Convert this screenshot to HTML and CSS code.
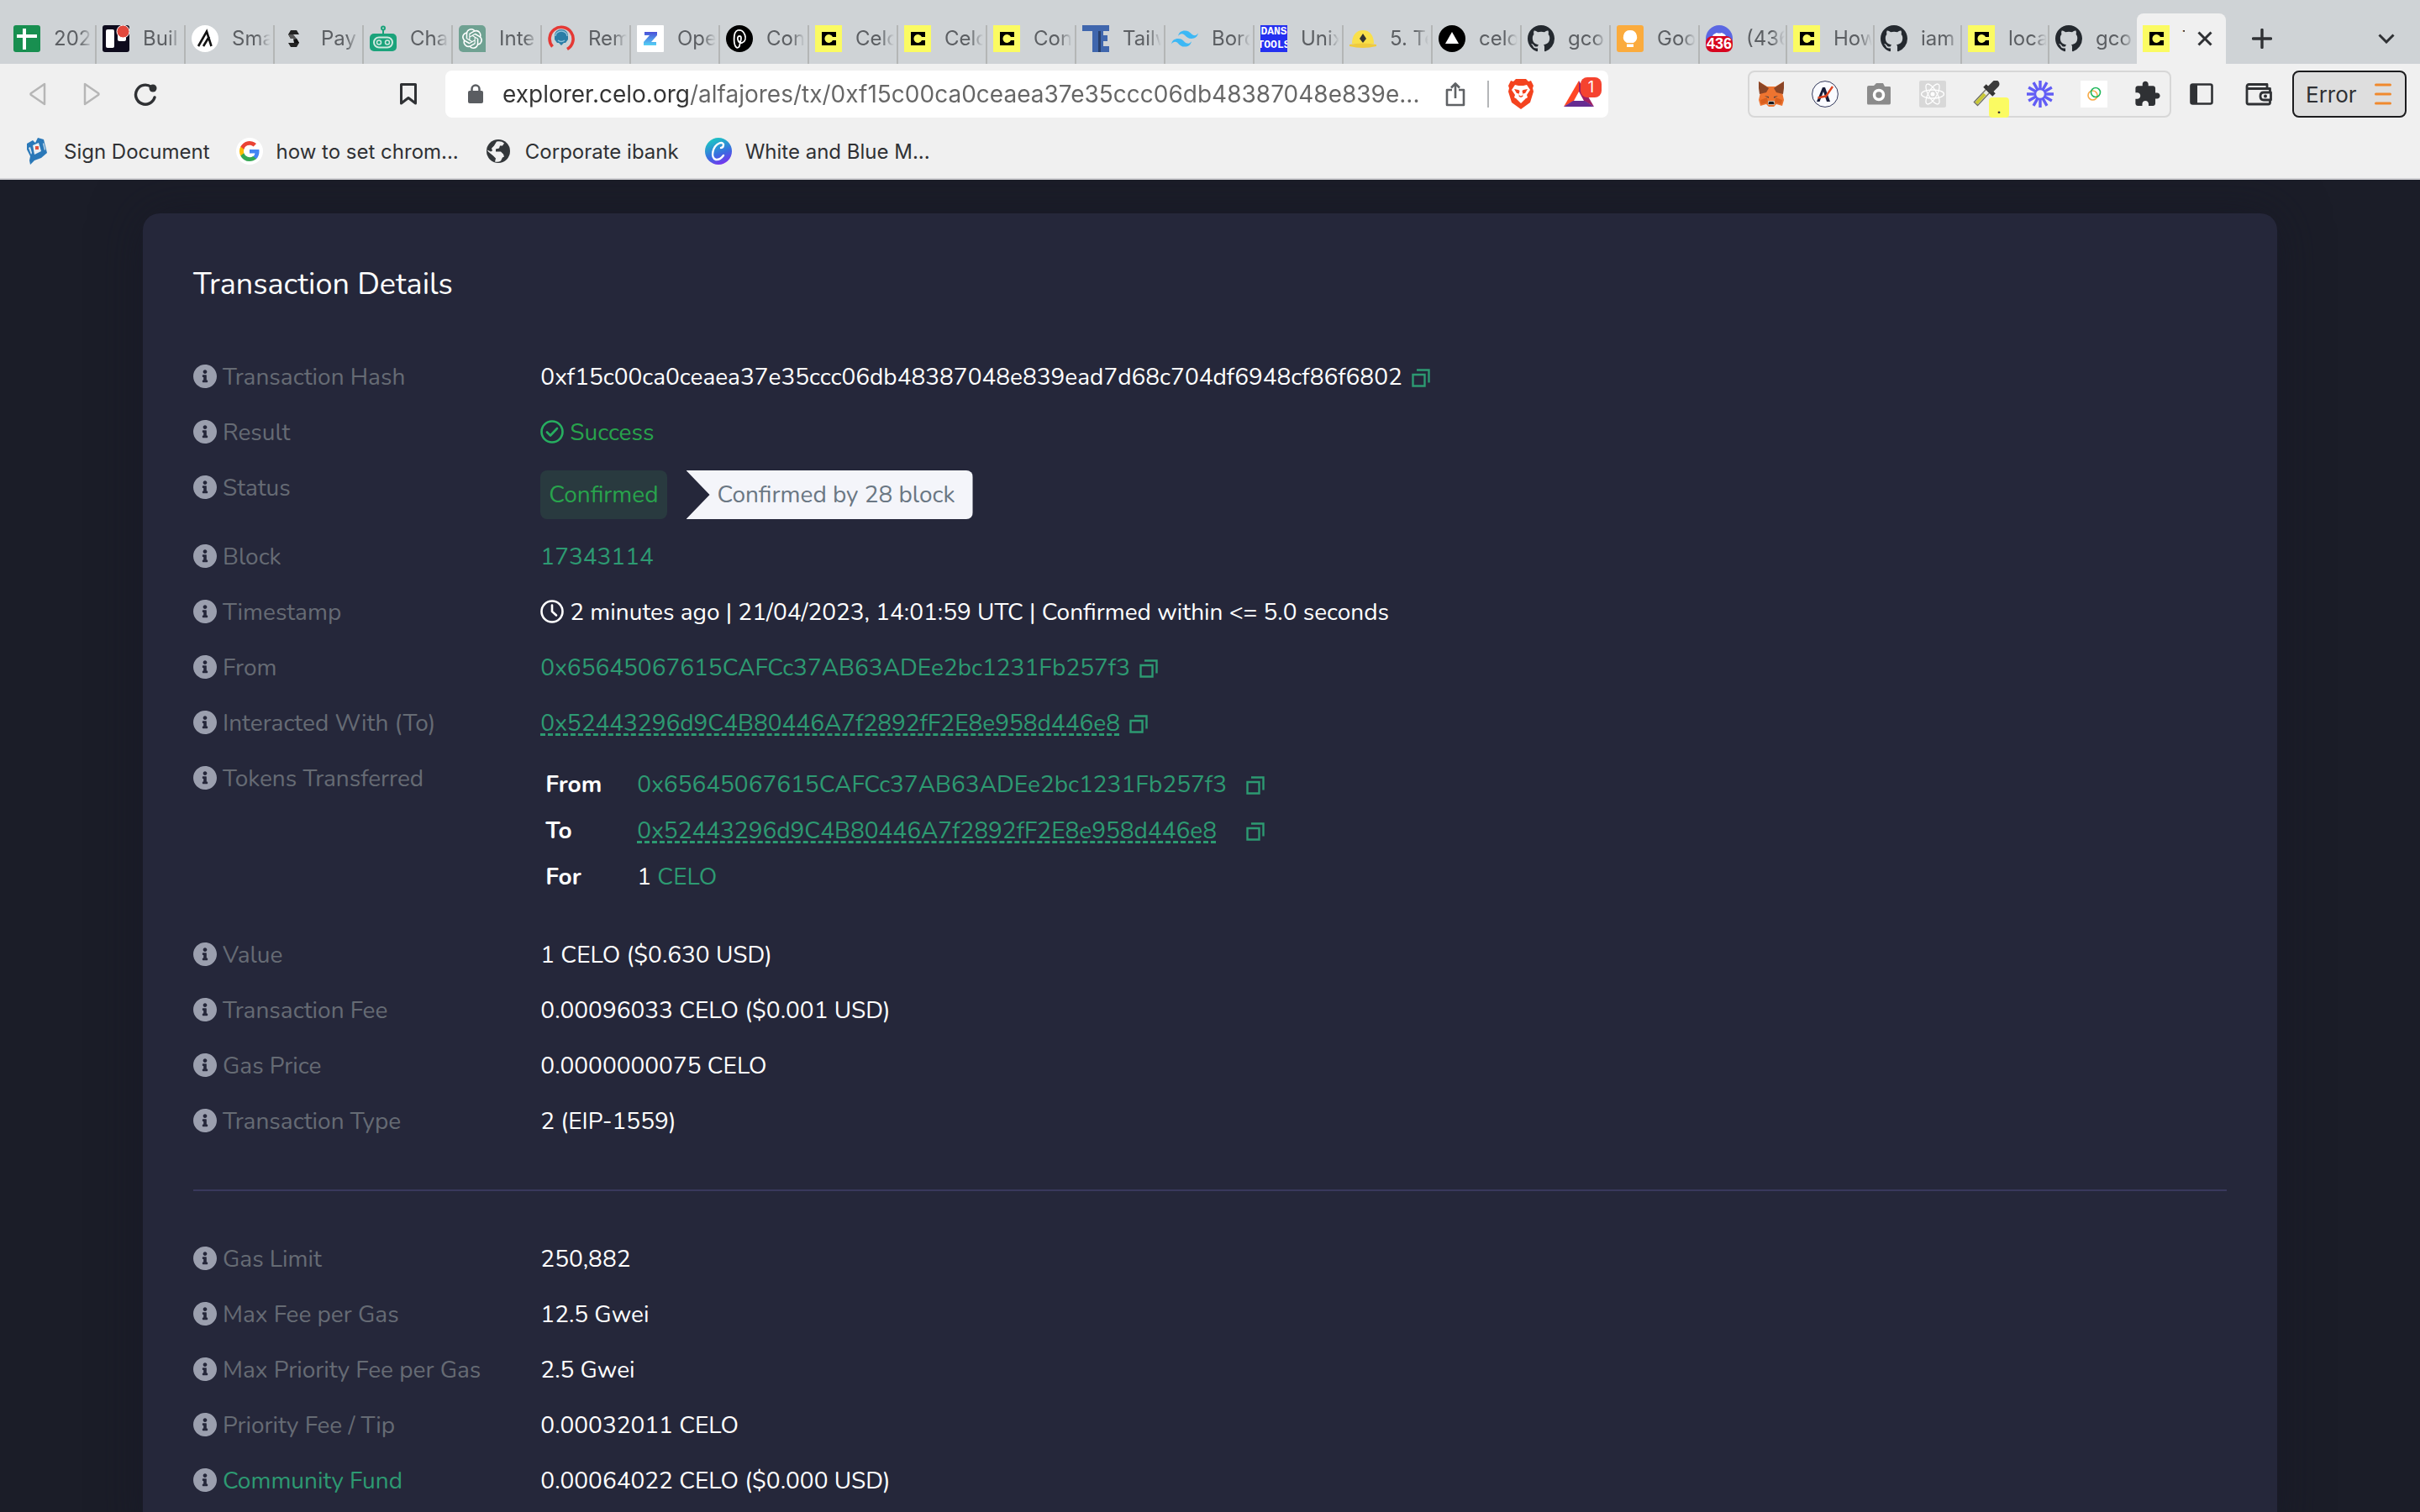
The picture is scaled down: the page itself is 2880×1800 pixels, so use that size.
FILE: index.html
```html
<!DOCTYPE html>
<html lang="en">
<head>
<meta charset="utf-8">
<title>Transaction Details</title>
<link rel="stylesheet" href="styles.css">
</head>
<body>
<svg class="sprite" aria-hidden="true">
  <symbol id="celo" viewBox="0 0 32 32"><path fill="#fbfb62" d="M0 0h32v32H0z"/><path fill="#000" d="M8 8h17v6h-4a5 5 0 1 0 0 4h4v6H8z"/></symbol>
  <symbol id="github" viewBox="0 0 16 16"><path fill="#24292f" d="M8 0C3.58 0 0 3.58 0 8c0 3.54 2.29 6.53 5.47 7.59.4.07.55-.17.55-.38 0-.19-.01-.82-.01-1.49-2.01.37-2.53-.49-2.69-.94-.09-.23-.48-.94-.82-1.13-.28-.15-.68-.52-.01-.53.63-.01 1.08.58 1.23.82.72 1.21 1.87.87 2.33.66.07-.52.28-.87.51-1.07-1.78-.2-3.64-.89-3.64-3.95 0-.87.31-1.59.82-2.15-.08-.2-.36-1.02.08-2.12 0 0 .67-.21 2.2.82.64-.18 1.32-.27 2-.27s1.36.09 2 .27c1.53-1.04 2.2-.82 2.2-.82.44 1.1.16 1.92.08 2.12.51.56.82 1.27.82 2.15 0 3.07-1.87 3.75-3.65 3.95.29.25.54.73.54 1.48 0 1.07-.01 1.93-.01 2.2 0 .21.15.46.55.38A8.01 8.01 0 0 0 16 8c0-4.42-3.58-8-8-8z"/></symbol>
  <symbol id="info" viewBox="8 8 496 496"><path fill="#9b9fae" d="M256 8C119.043 8 8 119.083 8 256c0 136.997 111.043 248 248 248s248-111.003 248-248C504 119.083 392.957 8 256 8zm0 110c23.196 0 42 18.804 42 42s-18.804 42-42 42-42-18.804-42-42 18.804-42 42-42zm56 254c0 6.627-5.373 12-12 12h-88c-6.627 0-12-5.373-12-12v-24c0-6.627 5.373-12 12-12h12v-64h-12c-6.627 0-12-5.373-12-12v-24c0-6.627 5.373-12 12-12h64c6.627 0 12 5.373 12 12v100h12c6.627 0 12 5.373 12 12v24z"/></symbol>
  <symbol id="copy" viewBox="0 0 22 22"><path fill="none" stroke="#2d9a72" stroke-width="2.400" d="M1.500 7h14v13.500h-14zM6 1.500h14.500v15"/></symbol>
</svg>

<div class="window">
  <header class="chrome">
    <nav class="tabs" aria-label="Tabs">
      <a class="tab" href="#"><svg class="favicon" viewBox="0 0 32 32"><rect width="32" height="32" rx="3" fill="#188f50"/><path stroke="#fff" stroke-width="4" d="M13 4v25M4 13h24"/></svg><span class="tab-title">202</span></a>
      <a class="tab" href="#"><svg class="favicon" viewBox="0 0 32 32"><rect width="32" height="32" rx="3" fill="#0d0a1c"/><rect x="4" y="5" width="10" height="22" rx="2" fill="#fff"/><rect x="18" y="5" width="10" height="14" rx="2" fill="#fff"/><circle cx="24.500" cy="7.500" r="7.500" fill="#e2483d" stroke="#fff"/></svg><span class="tab-title">Buil</span></a>
      <a class="tab" href="#"><svg class="favicon" viewBox="0 0 32 32"><circle cx="16" cy="16" r="16" fill="#fff"/><path fill="none" stroke="#111" stroke-width="2.600" d="M8 25 18 7.500 23.500 25M14 25l7-11.500"/></svg><span class="tab-title">Sma</span></a>
      <a class="tab" href="#"><svg class="favicon" viewBox="0 0 32 32"><path fill="#222" d="M12 6h7l3 5h-7l-3 5-3-5z"/><path fill="#555" d="m9 11 3 5h7l-4-5z"/><path fill="#222" d="M19 26h-7l-3-5h7l3-5 3 5z"/><path fill="#111" d="m22 21-3-5-4 .5 1 4.500z"/></svg><span class="tab-title">Pay</span></a>
      <a class="tab" href="#"><svg class="favicon" viewBox="0 0 32 32"><g fill="none" stroke="#1ba37b"><circle cx="16" cy="3.500" r="2" stroke-width="2"/><path stroke-width="2" d="M16 6v5"/></g><rect y="10" width="32" height="21" rx="5" fill="#1ba37b"/><rect x="5" y="14.500" width="22" height="12" rx="6" fill="none" stroke="#d0e8df" stroke-width="2"/><circle cx="11" cy="20.500" r="2.500" fill="none" stroke="#d0e8df" stroke-width="1.500"/><circle cx="21" cy="20.500" r="2.500" fill="none" stroke="#d0e8df" stroke-width="1.500"/></svg><span class="tab-title">Cha</span></a>
      <a class="tab" href="#"><svg class="favicon" viewBox="0 0 32 32"><path fill="#6fa192" d="M5 0h22a5 5 0 0 1 5 5v27H5a5 5 0 0 1-5-5V5a5 5 0 0 1 5-5z"/><path fill="#fff" transform="translate(4 4)" d="M22.282 9.821a5.985 5.985 0 0 0-.516-4.910 6.046 6.046 0 0 0-6.510-2.900A6.065 6.065 0 0 0 4.981 4.182a5.985 5.985 0 0 0-3.998 2.900 6.046 6.046 0 0 0 .743 7.097 5.980 5.980 0 0 0 .511 4.911 6.051 6.051 0 0 0 6.515 2.900A5.985 5.985 0 0 0 13.260 24a6.056 6.056 0 0 0 5.772-4.206 5.989 5.989 0 0 0 3.998-2.900 6.056 6.056 0 0 0-.748-7.073zm-9.022 12.608a4.476 4.476 0 0 1-2.876-1.041l.142-.080 4.778-2.758a.795.795 0 0 0 .393-.681v-6.737l2.020 1.169a.071.071 0 0 1 .038.052v5.583a4.504 4.504 0 0 1-4.495 4.494zm-9.661-4.125a4.471 4.471 0 0 1-.535-3.014l.142.085 4.783 2.758a.771.771 0 0 0 .781 0l5.843-3.369v2.332a.080.080 0 0 1-.033.062L9.740 19.950a4.499 4.499 0 0 1-6.141-1.646zM2.341 7.896a4.485 4.485 0 0 1 2.366-1.973V11.600a.766.766 0 0 0 .388.677l5.814 3.354-2.020 1.169a.076.076 0 0 1-.071 0l-4.830-2.787A4.504 4.504 0 0 1 2.341 7.872zm16.596 3.856L13.104 8.364 15.119 7.200a.076.076 0 0 1 .071 0l4.830 2.791a4.494 4.494 0 0 1-.677 8.104v-5.677a.790.790 0 0 0-.407-.667zm2.011-3.023l-.142-.085-4.774-2.782a.776.776 0 0 0-.785 0L9.409 9.230V6.897a.066.066 0 0 1 .028-.062l4.830-2.787a4.499 4.499 0 0 1 6.680 4.660zM8.307 12.863l-2.020-1.164a.080.080 0 0 1-.038-.057V6.074a4.499 4.499 0 0 1 7.376-3.454l-.142.081L8.704 5.459a.795.795 0 0 0-.393.681zm1.098-2.365l2.602-1.500 2.607 1.500v2.999l-2.597 1.500-2.607-1.500Z"/></svg><span class="tab-title">Inte</span></a>
      <a class="tab" href="#"><svg class="favicon" viewBox="0 0 32 32"><path fill="none" stroke="#e53935" stroke-width="3.600" d="M5.500 25.500A14 14 0 1 1 23 28.500"/><path fill="#2b7da6" d="M8 12a8 7 0 0 1 16 0v5l-3 4h-2l-3 3-3-3h-2l-3-4z"/><path fill="none" stroke="#8fc3dc" stroke-width="1.500" d="M9 13a7 6 0 0 1 14 0M12 18q4 3 8 0"/></svg><span class="tab-title">Rem</span></a>
      <a class="tab" href="#"><svg class="favicon" viewBox="0 0 32 32"><defs><linearGradient id="zg" x1="0" x2="0" y1="0" y2="1"><stop offset="0" stop-color="#4a4fd8"/><stop offset="1" stop-color="#55d2f5"/></linearGradient></defs><rect width="32" height="32" rx="1" fill="#fff"/><path fill="url(#zg)" d="M9 8h15v4l-7 8h6v4H8v-4l7-8H9z"/></svg><span class="tab-title">Ope</span></a>
      <a class="tab" href="#"><svg class="favicon" viewBox="0 0 32 32"><circle cx="16" cy="16" r="16" fill="#000"/><path fill="none" stroke="#fff" stroke-width="1.800" d="M12 26c-3-3-4-18 2-20 8-2 13 12 5 15-5 1-7-8-3-8 3 0 2 4 1 7l-1 5q-2 3-4 1z"/></svg><span class="tab-title">Con</span></a>
      <a class="tab" href="#"><svg class="favicon"><use href="#celo"/></svg><span class="tab-title">Celo</span></a>
      <a class="tab" href="#"><svg class="favicon"><use href="#celo"/></svg><span class="tab-title">Celo</span></a>
      <a class="tab" href="#"><svg class="favicon"><use href="#celo"/></svg><span class="tab-title">Con</span></a>
      <a class="tab" href="#"><svg class="favicon" viewBox="0 0 32 32"><path fill="#3f66ad" d="M0 0h32v7h-7v5h5v7h-5v6h7v7H12V7H0z"/><path fill="#27406e" d="M19 7h3v25h-3z"/></svg><span class="tab-title">Tailw</span></a>
      <a class="tab" href="#"><svg class="favicon" viewBox="2 1 20 20"><path fill="#3db8f5" d="M12 5C9.330 5 7.670 6.330 7 9c1-1.330 2.170-1.830 3.500-1.500.76.190 1.310.740 1.910 1.350C13.390 9.850 14.530 11 17 11c2.670 0 4.330-1.330 5-4-1 1.330-2.170 1.830-3.500 1.500-.76-.19-1.310-.74-1.910-1.350C15.610 6.150 14.470 5 12 5zM7 11c-2.670 0-4.330 1.330-5 4 1-1.330 2.170-1.830 3.500-1.500.76.190 1.310.740 1.910 1.350C8.390 15.850 9.530 17 12 17c2.670 0 4.330-1.330 5-4-1 1.330-2.170 1.830-3.500 1.500-.76-.19-1.310-.74-1.910-1.350C10.610 12.150 9.470 11 7 11z"/></svg><span class="tab-title">Bord</span></a>
      <a class="tab" href="#"><span class="favicon dans"><span>DANS</span><span>TOOLS</span></span><span class="tab-title">Unix</span></a>
      <a class="tab" href="#"><svg class="favicon" viewBox="0 0 32 32"><path fill="#f9e04b" d="M3 22C3 12 8 6 16 6s13 6 13 16z"/><path fill="#f0cb3c" d="M0 23q16-3 32 0v2q-16 4-32 0z"/><path fill="#333" d="m16 10 4 6-4 5-4-5z"/></svg><span class="tab-title">5. Te</span></a>
      <a class="tab" href="#"><svg class="favicon" viewBox="0 0 32 32"><circle cx="16" cy="16" r="16" fill="#000"/><path fill="#fff" d="m16 8 8 14H8z"/></svg><span class="tab-title">celo</span></a>
      <a class="tab" href="#"><svg class="favicon"><use href="#github"/></svg><span class="tab-title">gco</span></a>
      <a class="tab" href="#"><svg class="favicon" viewBox="0 0 32 32"><rect width="32" height="32" rx="3" fill="#fbab3d"/><path fill="#fff" d="M16 6a8 8 0 0 1 4 15h-8a8 8 0 0 1 4-15zM12 22.500h8V26h-8z"/></svg><span class="tab-title">Goo</span></a>
      <a class="tab tab-slim" href="#"><span class="favicon unread"><svg viewBox="0 0 32 32"><circle cx="16" cy="16" r="16" fill="#5b67e3"/><path fill="#fff" d="M8 14q0-3 3-4l2-1q3 1 6 0l2 1q3 1 3 4z"/></svg><span>436</span></span><span class="tab-title">(436)</span></a>
      <a class="tab tab-slim" href="#"><svg class="favicon"><use href="#celo"/></svg><span class="tab-title">How</span></a>
      <a class="tab tab-slim" href="#"><svg class="favicon"><use href="#github"/></svg><span class="tab-title">iam</span></a>
      <a class="tab tab-slim" href="#"><svg class="favicon"><use href="#celo"/></svg><span class="tab-title">loca</span></a>
      <a class="tab tab-slim tab-last" href="#"><svg class="favicon"><use href="#github"/></svg><span class="tab-title">gco</span></a>
      <div class="tab-active"><svg class="favicon"><use href="#celo"/></svg><span class="tab-stub">T</span><button class="icon-btn tab-close" aria-label="Close tab"><svg width="18" height="18" viewBox="0 0 18 18"><path stroke="#2f3134" stroke-width="3" d="m1.500 1.500 15 15m0-15-15 15"/></svg></button></div>
      <button class="icon-btn new-tab" aria-label="New tab"><svg width="24" height="24" viewBox="0 0 24 24"><path stroke="#2f3134" stroke-width="3.400" stroke-linecap="round" d="M12 1.500v21M1.500 12h21"/></svg></button>
      <button class="icon-btn tab-search" aria-label="Search tabs"><svg width="20" height="12" viewBox="0 0 20 12"><path fill="none" stroke="#2f3134" stroke-width="3" d="m1.500 1.500 8.500 8.500 8.500-8.500"/></svg></button>
    </nav>

    <div class="toolbar">
      <div class="history">
        <button class="icon-btn" aria-label="Back"><svg width="20" height="28" viewBox="0 0 20 28"><path fill="none" stroke="#b6b6b6" stroke-width="2.500" stroke-linejoin="round" d="M18 2v24L2 15q-1-1 0-2z"/></svg></button>
        <button class="icon-btn" aria-label="Forward"><svg width="20" height="28" viewBox="0 0 20 28"><path fill="none" stroke="#b6b6b6" stroke-width="2.500" stroke-linejoin="round" d="M2 2v24l16-11q1-1 0-2z"/></svg></button>
        <button class="icon-btn" aria-label="Reload"><svg width="28" height="28" viewBox="0 0 28 28"><path fill="none" stroke="#2f3134" stroke-width="3.400" stroke-linecap="round" d="M21 5.500A11.500 11.500 0 1 0 25 18"/><circle cx="23" cy="7" r="4.500" fill="#2f3134"/></svg></button>
      </div>
      <button class="icon-btn" aria-label="Bookmark this page"><svg width="22" height="28" viewBox="0 0 22 28"><path fill="none" stroke="#2f3134" stroke-width="3" stroke-linejoin="round" d="M2.500 2.500h17V25L11 18.500 2.500 25z"/></svg></button>
      <div class="omnibox">
        <svg width="18" height="24" viewBox="0 0 18 24"><rect y="8" width="18" height="15" rx="2" fill="#5a5d61"/><path fill="none" stroke="#5a5d61" stroke-width="2.500" d="M4.500 9V6a4.500 4.500 0 0 1 9 0v3"/></svg>
        <input class="url" type="text" aria-label="Address" value="explorer.celo.org/alfajores/tx/0xf15c00ca0ceaea37e35ccc06db48387048e839e...">
        <button class="icon-btn" aria-label="Share"><svg width="24" height="32" viewBox="0 0 24 32"><path fill="none" stroke="#5f6265" stroke-width="2.600" stroke-linejoin="round" d="M8 11H2v18h20V11h-6M12 21V3.500M7 8.500l5-5 5 5"/></svg></button>
        <span class="divider"></span>
        <button class="icon-btn shields" aria-label="Brave Shields"><svg width="32" height="36" viewBox="0 0 32 36"><path fill="#f4431f" d="M10 0h12l3 3 3-1 3 6-1 3 1 4-4 13-11 8-11-8L1 15l1-4-1-3 3-6 3 1z"/><path fill="#fff" d="M9 7l4 1h6l4-1 4 6-4 6 1 3-5 3-3-1.500L13 25l-5-3 1-3-4-6z"/><path fill="#f4431f" d="m8 12 5 1 1.500 1-1 5 2.500 1.500 2.500-1.500-1-5 1.500-1 5-1-3 5-3 .5.500 3-2.500 2-2.500-2 .5-3-3-.5z"/><path fill="#fff" d="m11 24 5-2.500 5 2.500-5 5z"/></svg></button>
        <button class="icon-btn rewards" aria-label="Brave Rewards"><svg width="36" height="32" viewBox="0 0 36 32"><path fill="#ff4724" d="M18 0 0 31l12-7 6-11z"/><path fill="#9e1f63" d="M18 0v13l6 11 12 7z"/><path fill="#662d91" d="M0 31h36l-11-7H11z"/></svg><span class="badge">1</span></button>
      </div>
      <div class="extensions">
        <button class="icon-btn" aria-label="MetaMask"><svg width="32" height="32" viewBox="0 0 32 32"><path fill="#ee7430" d="m1 1 10 6h10l10-6-2 13 2 9-2 7-7-2-3 3h-6l-3-3-7 2-2-7 2-9z"/><path fill="#8a4526" d="m1 1 12 8-3 5-8 2-1-7zM31 1 19 9l3 5 8 2 1-7z"/><path fill="#d9601f" d="m3 23 8-3 1 6-8 2zM29 23l-8-3-1 6 8 2z"/><path fill="#5a4640" d="m8 18 5 1v2zM24 18l-5 1v2z"/><path fill="#c9b5a8" d="M12 24h8v5h-8z"/><path fill="#15181c" d="M13.500 25h5l1 3h-7z"/></svg></button>
        <button class="icon-btn" aria-label="Aurora"><svg width="32" height="32" viewBox="0 0 32 32"><circle cx="16" cy="16" r="15.400" fill="#fafbff" stroke="#33395c" stroke-width="1"/><path fill="#171c38" d="M6 25 13 8h3l6 17h-4L14 13 9.500 25z"/><path stroke="#dd4420" stroke-width="2.400" d="m25 7-9 13M7.500 20.500l9-2"/></svg></button>
        <button class="icon-btn" aria-label="Screenshot"><svg width="30" height="26" viewBox="0 0 30 26"><path fill="#8b8b8b" d="M3 3h6l3-3h8l2 4h6q1 0 1 1.500v18q0 2-1.500 2h-25Q1 25.500 1 24V5q0-2 2-2z"/><circle cx="15" cy="14" r="5.500" fill="none" stroke="#fff" stroke-width="3.500"/></svg></button>
        <button class="icon-btn" aria-label="React tools"><svg width="32" height="32" viewBox="0 0 32 32"><rect width="32" height="32" rx="2" fill="#d8d8d8"/><g fill="none" stroke="#fff" stroke-width="1.300"><ellipse cx="16" cy="16" rx="13.500" ry="5"/><ellipse cx="16" cy="16" rx="13.500" ry="5" transform="rotate(60 16 16)"/><ellipse cx="16" cy="16" rx="13.500" ry="5" transform="rotate(120 16 16)"/></g><circle cx="16" cy="16" r="2.500" fill="#fff"/></svg></button>
        <button class="icon-btn picker" aria-label="Colour picker"><svg width="32" height="32" viewBox="0 0 32 32"><path stroke="#6c6c62" stroke-width="7" d="M3 28 18 12"/><path stroke="#e9e9e0" stroke-width="4.500" d="M4 27 18 12"/><path stroke="#c9c832" stroke-width="4" d="m4 27 10-11"/><path stroke="#333" stroke-width="5" d="m14 6 11 11"/><path stroke="#3c3c3c" stroke-width="9" stroke-linecap="round" d="m21 10 6-6"/></svg><span class="picker-badge">.</span></button>
        <button class="icon-btn" aria-label="Loom"><svg width="32" height="32" viewBox="0 0 32 32"><g fill="none" stroke="#625df5" stroke-width="3.400"><circle cx="16" cy="16" r="6" stroke-width="2.400"/><path id="ray" d="M16 0v10M16 22v10"/><use href="#ray" transform="rotate(30 16 16)"/><use href="#ray" transform="rotate(60 16 16)"/><use href="#ray" transform="rotate(90 16 16)"/><use href="#ray" transform="rotate(120 16 16)"/><use href="#ray" transform="rotate(150 16 16)"/></g></svg></button>
        <button class="icon-btn" aria-label="Celo wallet"><svg width="32" height="32" viewBox="0 0 32 32"><path fill="#fff" d="M0 0h32v32H0z"/><g fill="none" stroke-width="1.600"><circle cx="14.500" cy="17.500" r="5.500" stroke="#f7ac4b"/><circle cx="18" cy="14" r="5.500" stroke="#21b85c"/></g></svg></button>
        <button class="icon-btn" aria-label="Extensions"><svg width="32" height="32" viewBox="1 .5 23 23"><path fill="#2f3134" d="M20.500 11H19V7c0-1.100-.9-2-2-2h-4V3.500C13 2.120 11.880 1 10.500 1S8 2.120 8 3.500V5H4c-1.100 0-1.990.9-1.990 2v3.800H3.500c1.490 0 2.700 1.210 2.700 2.700s-1.210 2.700-2.700 2.700H2V20c0 1.100.9 2 2 2h3.800v-1.500c0-1.490 1.210-2.700 2.700-2.700 1.490 0 2.700 1.210 2.700 2.700V22H17c1.100 0 2-.9 2-2v-4h1.500c1.380 0 2.500-1.120 2.500-2.500S21.880 11 20.500 11z"/></svg></button>
      </div>
      <button class="icon-btn sidebar-btn" aria-label="Sidebar"><svg width="28" height="26" viewBox="0 0 28 26"><rect x="1.500" y="1.500" width="25" height="23" rx="2" fill="none" stroke="#2f3134" stroke-width="2.600"/><path fill="#2f3134" d="M1 1h8v24H1z"/></svg></button>
      <button class="icon-btn wallet-btn" aria-label="Wallet"><svg width="32" height="28" viewBox="0 0 32 28"><path fill="none" stroke="#2f3134" stroke-width="2.800" stroke-linejoin="round" d="M29.500 11V7.500H3q-1 0-1 1.500v15q0 2 2 2h23.500q2 0 2-2v-3M2 8V5q0-2.500 2.500-2.500H26V7M30.500 12H22q-4 0-4 4.500t4 4.500h8.500z"/><circle cx="24" cy="16.500" r="2" fill="#2f3134"/></svg></button>
      <button class="error-btn">Error<svg width="20" height="26" viewBox="0 0 20 26"><path stroke="#f0892d" stroke-width="3" stroke-linecap="round" d="M1.500 2h17M1.500 13h17M1.500 24h17"/></svg></button>
    </div>

    <nav class="bookmarks" aria-label="Bookmarks">
      <a href="#"><svg width="32" height="32" viewBox="0 0 32 32"><path fill="#2a78b8" d="m4 7 7-4 3 3 3-6 7 2 4 16-7 6-8 3-5 5-1-5 1-5-4-8z"/><path fill="#e9eef2" d="m11 9 7-3 3 10-8 4z"/><path fill="#d9e6f0" d="m6 12 3 8 1-2-2-7zM23 7l2 8 1-1-2-8z"/><path fill="#e0533f" d="M14 10h4v4h-4z"/></svg>Sign Document</a>
      <a href="#"><svg width="32" height="32" viewBox="0 0 32 32"><circle cx="16" cy="16" r="16" fill="#fff"/><g transform="translate(4 4)"><path fill="#4285f4" d="M23.500 12.300c0-.9-.1-1.600-.2-2.300H12v4.500h6.500a5.600 5.600 0 0 1-2.400 3.700v3h3.900c2.300-2.100 3.500-5.200 3.500-8.900z"/><path fill="#34a853" d="M12 24c3.200 0 6-1.100 8-2.900l-3.900-3a7.200 7.200 0 0 1-10.800-3.800h-4v3.100A12 12 0 0 0 12 24z"/><path fill="#fbbc05" d="M5.300 14.300a7.200 7.200 0 0 1 0-4.600V6.600h-4a12 12 0 0 0 0 10.800z"/><path fill="#ea4335" d="M12 4.800c1.800 0 3.300.6 4.600 1.800L20 3.100A12 12 0 0 0 1.300 6.600l4 3.100A7.100 7.100 0 0 1 12 4.800z"/></g></svg>how to set chrom...</a>
      <a href="#"><svg width="32" height="32" viewBox="0 0 32 32"><circle cx="16" cy="16" r="14" fill="#33373a"/><path fill="#f0f0f0" d="M14 4.500q6-1 9 2l-2 3-3 0-1 3-4 1 0 3 6 0 3 3 1 3-2 1-2 4q-3 2-7 1l1-4-3-3-6-5q-1-1-1-2l4 2 2-1-1-3 3-3z"/></svg>Corporate ibank</a>
      <a href="#"><svg width="32" height="32" viewBox="0 0 32 32"><defs><linearGradient id="cg" x1=".3" x2=".7" y1="0" y2="1"><stop offset=".1" stop-color="#1fbcc6"/><stop offset=".6" stop-color="#3a6de0"/><stop offset="1" stop-color="#7b2ff0"/></linearGradient></defs><circle cx="16" cy="16" r="16" fill="url(#cg)"/><path fill="none" stroke="#fff" stroke-width="2.400" stroke-linecap="round" d="M19 12q3 0 3-4-1-3-5-1.500C9 10 6 24 13 26q5 .5 9-5"/></svg>White and Blue M...</a>
    </nav>
  </header>

  <main class="viewport">
    <section class="card">
      <h1>Transaction Details</h1>
      <dl>
        <div class="row"><dt><svg class="info"><use href="#info"/></svg>Transaction Hash</dt><dd><span>0xf15c00ca0ceaea37e35ccc06db48387048e839ead7d68c704df6948cf86f6802</span><button class="icon-btn copy" aria-label="Copy hash"><svg><use href="#copy"/></svg></button></dd></div>
        <div class="row"><dt><svg class="info"><use href="#info"/></svg>Result</dt><dd class="success"><svg class="info" viewBox="0 0 28 28"><g fill="none" stroke="#27ae60" stroke-width="2.600"><circle cx="14" cy="14" r="12.500"/><path stroke-linecap="round" stroke-linejoin="round" d="m8 14.500 4 4 8-8.500"/></g></svg>Success</dd></div>
        <div class="row"><dt><svg class="info"><use href="#info"/></svg>Status</dt><dd class="status"><span class="confirmed">Confirmed</span><span class="blocks">Confirmed by 28 block</span></dd></div>
        <div class="row"><dt><svg class="info"><use href="#info"/></svg>Block</dt><dd><a href="#">17343114</a></dd></div>
        <div class="row"><dt><svg class="info"><use href="#info"/></svg>Timestamp</dt><dd class="time"><svg class="info" viewBox="0 0 28 28"><g fill="none" stroke="#fff" stroke-width="2.600"><circle cx="14" cy="14" r="12.500"/><path stroke-linecap="round" d="M14 6.500V14l5 4.500"/></g></svg>2 minutes ago | 21/04/2023, 14:01:59 UTC | Confirmed within &lt;= 5.0 seconds</dd></div>
        <div class="row"><dt><svg class="info"><use href="#info"/></svg>From</dt><dd><a href="#">0x65645067615CAFCc37AB63ADEe2bc1231Fb257f3</a><button class="icon-btn copy" aria-label="Copy address"><svg><use href="#copy"/></svg></button></dd></div>
        <div class="row"><dt><svg class="info"><use href="#info"/></svg>Interacted With (To)</dt><dd><a class="contract" href="#">0x52443296d9C4B80446A7f2892fF2E8e958d446e8</a><button class="icon-btn copy" aria-label="Copy address"><svg><use href="#copy"/></svg></button></dd></div>
        <div class="row"><dt><svg class="info"><use href="#info"/></svg>Tokens Transferred</dt><dd>
          <table>
            <tr><th scope="row">From</th><td><a href="#">0x65645067615CAFCc37AB63ADEe2bc1231Fb257f3</a></td><td><button class="icon-btn copy" aria-label="Copy address"><svg><use href="#copy"/></svg></button></td></tr>
            <tr><th scope="row">To</th><td><a class="contract" href="#">0x52443296d9C4B80446A7f2892fF2E8e958d446e8</a></td><td><button class="icon-btn copy" aria-label="Copy address"><svg><use href="#copy"/></svg></button></td></tr>
            <tr><th scope="row">For</th><td>1 <a href="#">CELO</a></td><td></td></tr>
          </table></dd></div>
        <div class="row"><dt><svg class="info"><use href="#info"/></svg>Value</dt><dd>1 CELO ($0.630 USD)</dd></div>
        <div class="row"><dt><svg class="info"><use href="#info"/></svg>Transaction Fee</dt><dd>0.00096033 CELO ($0.001 USD)</dd></div>
        <div class="row"><dt><svg class="info"><use href="#info"/></svg>Gas Price</dt><dd>0.0000000075 CELO</dd></div>
        <div class="row"><dt><svg class="info"><use href="#info"/></svg>Transaction Type</dt><dd>2 (EIP-1559)</dd></div>
      </dl>
      <hr>
      <dl>
        <div class="row"><dt><svg class="info"><use href="#info"/></svg>Gas Limit</dt><dd>250,882</dd></div>
        <div class="row"><dt><svg class="info"><use href="#info"/></svg>Max Fee per Gas</dt><dd>12.5 Gwei</dd></div>
        <div class="row"><dt><svg class="info"><use href="#info"/></svg>Max Priority Fee per Gas</dt><dd>2.5 Gwei</dd></div>
        <div class="row"><dt><svg class="info"><use href="#info"/></svg>Priority Fee / Tip</dt><dd>0.00032011 CELO</dd></div>
        <div class="row"><dt><svg class="info"><use href="#info"/></svg><a href="#">Community Fund</a></dt><dd>0.00064022 CELO ($0.000 USD)</dd></div>
      </dl>
    </section>
  </main>
</div>
</body>
</html>
```
FILE: styles.css
```css
* { box-sizing: border-box; }

body {
  margin: 0;
  font-family: Nunito, "Open Sans", sans-serif;
  background: #1b1d28;
}

svg { display: block; flex: none; }
a { color: inherit; text-decoration: none; }
button { font: inherit; color: inherit; }

.sprite { position: absolute; width: 0; height: 0; }

.window {
  display: flex;
  flex-direction: column;
  height: 100vh;
}

.icon-btn {
  display: flex;
  flex: none;
  align-items: center;
  justify-content: center;
  width: 32px;
  height: 32px;
  padding: 0;
  border: 0;
  background: none;
}

/* Browser chrome */
.chrome {
  flex: none;
  font-family: Inter, sans-serif;
  font-size: 24px;
  color: #2f3134;
  background: #f0f0f0;
  border-bottom: 2px solid #d0d0d4;
}

.tabs {
  display: flex;
  align-items: flex-end;
  height: 76px;
  padding: 0 30px 0 9px;
  background: #cfd3d6;
}

.tab {
  display: flex;
  flex: 0 0 106px;
  gap: 16px;
  height: 46px;
  padding-left: 7px;
  border-right: 2px solid #b4b6b6;
}
.tab-slim { flex-basis: 104px; }
.tab-last { border-color: transparent; }

.favicon { flex: none; width: 32px; height: 32px; }

.tab-title {
  width: 46px;
  overflow: hidden;
  line-height: 32px;
  white-space: nowrap;
  color: #5c5f63;
  mask-image: linear-gradient(90deg, #000 65%, transparent);
}

.tab-active {
  display: flex;
  flex: none;
  align-items: flex-start;
  width: 106px;
  height: 60px;
  padding: 14px 9px 0 7px;
  border-radius: 8px 8px 0 0;
  background: #f0f0f0;
}
.tab-stub {
  width: 3px;
  margin-left: 15px;
  overflow: hidden;
  font-size: 20px;
  line-height: 28px;
  color: #2f3134;
}
.tab-close { margin-left: auto; }

.new-tab { margin: 0 0 14px 27px; }
.tab-search { margin: 0 0 14px auto; width: 20px; }

.dans {
  display: flex;
  flex-direction: column;
  align-items: center;
  overflow: hidden;
  font: bold 13px/16px "Liberation Mono", monospace;
  color: #fff;
  background: #2430f0;
}

.unread { position: relative; }
.unread span {
  position: absolute;
  inset: 13px 0 0;
  border-radius: 8px;
  font: bold 18px/19px "Liberation Sans", sans-serif;
  text-align: center;
  color: #fff;
  background: #d7051f;
}

.toolbar {
  display: flex;
  align-items: center;
  height: 72px;
  padding: 0 16px 0 29px;
}

.history { display: flex; gap: 32px; margin-right: 281px; }

.omnibox {
  display: flex;
  flex: 1;
  align-items: center;
  min-width: 0;
  height: 56px;
  margin: 0 166px 0 28px;
  padding: 0 16px 0 27px;
  border-radius: 8px;
  background: #fff;
}

.url {
  flex: 1;
  min-width: 0;
  height: 56px;
  margin-left: 23px;
  padding: 0;
  border: 0;
  outline: 0;
  font: 28px Inter, sans-serif;
  color: transparent;
  background: linear-gradient(90deg, #333 222px, #666 222px);
  background-clip: text;
}

.divider {
  width: 2px;
  height: 32px;
  margin: 0 22px;
  background: #b4b6b8;
}
.shields { margin-right: 34px; }
.rewards { position: relative; width: 38px; }
.badge {
  position: absolute;
  top: -4px;
  right: -8px;
  width: 25px;
  border-radius: 8px;
  font-size: 18px;
  line-height: 24px;
  color: #fff;
  background: #f5432f;
}

.extensions {
  display: flex;
  align-items: center;
  gap: 32px;
  height: 56px;
  padding: 0 10px;
  border: 2px solid #d7d7d7;
  border-radius: 8px;
}

.picker { position: relative; }
.picker-badge {
  position: absolute;
  top: 20px;
  left: 19px;
  width: 24px;
  border-radius: 4px;
  font-size: 20px;
  line-height: 24px;
  background: #fbfb62;
}

.sidebar-btn { margin-left: 20px; }
.wallet-btn { margin: 0 24px 0 36px; }

.error-btn {
  display: flex;
  align-items: center;
  justify-content: space-between;
  width: 136px;
  height: 56px;
  padding: 0 16px 0 14px;
  border: 2px solid #1c1c1e;
  border-radius: 8px;
  font-size: 26px;
  background: #dedede;
}

.bookmarks {
  display: flex;
  gap: 31px;
  height: 64px;
  padding-left: 28px;
}
.bookmarks a { display: flex; align-items: center; gap: 16px; }

/* Explorer page */
.viewport {
  flex: 1;
  min-height: 0;
  padding: 40px 170px;
  overflow: auto;
  scrollbar-width: none;
}

.card {
  padding: 60px;
  border-radius: 20px;
  font-size: 28px;
  line-height: 42px;
  color: #fff;
  background: #25273a;
  box-shadow: 0 0 60px rgba(21, 24, 36, .6);
}

h1 {
  margin: 0 0 64px;
  font-size: 36px;
  font-weight: 400;
  line-height: 50px;
}

dl { display: grid; gap: 24px; margin: 0; }

.row {
  display: grid;
  grid-template-columns: repeat(6, minmax(0, 1fr));
  column-gap: 60px;
}

dt {
  display: flex;
  gap: 7px;
  align-items: center;
  align-self: start;
  white-space: nowrap;
  color: #666b74;
}

dd {
  display: flex;
  grid-column: 2 / -1;
  gap: 6px;
  align-items: center;
  margin: 0;
}
.success, .time { gap: 7px; }

.info { width: 28px; height: 28px; margin-bottom: 2px; }

.card a { color: #2d9a72; }
.card .contract {
  text-decoration: underline dashed 3px;
  text-underline-offset: 3px;
  text-decoration-skip-ink: none;
}

.copy svg { width: 22px; height: 22px; margin-top: 2px; }

.success { color: #28a34c; }

.status { gap: 23px; }
.confirmed {
  padding: 8px 10px;
  border-radius: 8px;
  color: #28a34c;
  background: #293a3f;
}
.blocks {
  padding: 8px 21px 8px 37px;
  border-radius: 0 8px 8px 0;
  color: #6a7783;
  background: #f4f5fa;
  clip-path: polygon(0 0, 100% 0, 100% 100%, 0 100%, 28px 50%);
}

table { margin-bottom: 21px; border-collapse: collapse; }
th, td { height: 55px; padding: 6px; text-align: left; }
th { width: 109px; font-weight: 700; }
td + td { padding-left: 12px; }

hr {
  height: 2px;
  margin: 60px 0;
  border: 0;
  background: #39395c;
}
```
